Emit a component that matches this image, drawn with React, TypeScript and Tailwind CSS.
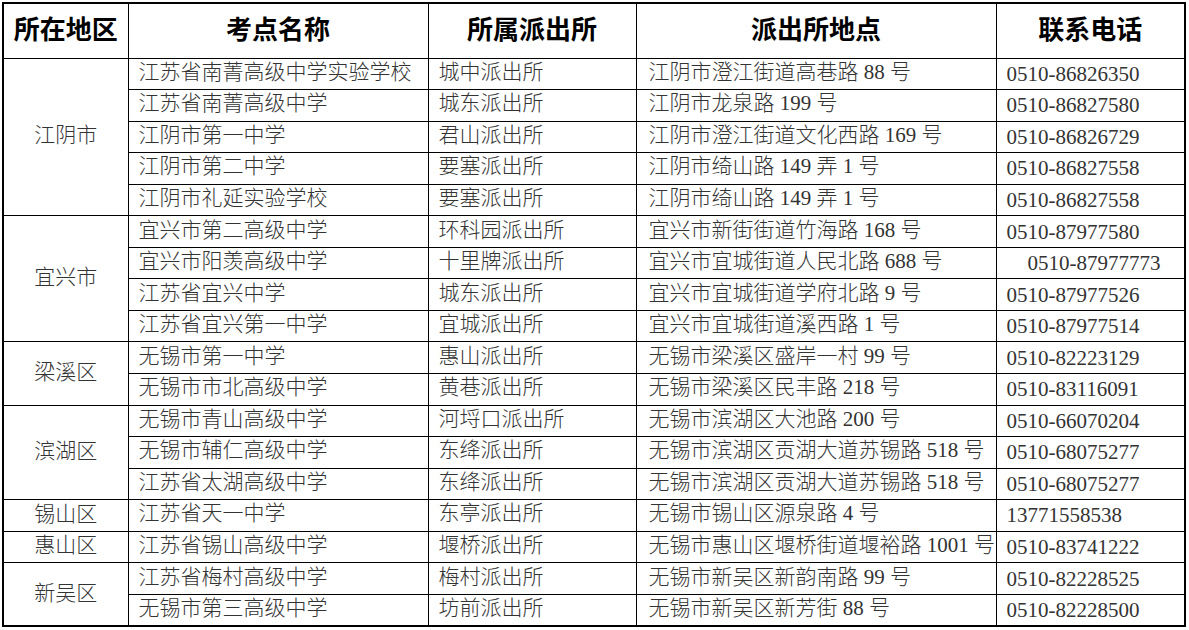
import React from "react";

type Row = { school: string; station: string; addr: string; phone: string; indent?: boolean };

const groups: { region: string; rows: Row[] }[] = [
  {
    region: "江阴市",
    rows: [
      { school: "江苏省南菁高级中学实验学校", station: "城中派出所", addr: "江阴市澄江街道高巷路 88 号", phone: "0510-86826350" },
      { school: "江苏省南菁高级中学", station: "城东派出所", addr: "江阴市龙泉路 199 号", phone: "0510-86827580" },
      { school: "江阴市第一中学", station: "君山派出所", addr: "江阴市澄江街道文化西路 169 号", phone: "0510-86826729" },
      { school: "江阴市第二中学", station: "要塞派出所", addr: "江阴市绮山路 149 弄 1 号", phone: "0510-86827558" },
      { school: "江阴市礼延实验学校", station: "要塞派出所", addr: "江阴市绮山路 149 弄 1 号", phone: "0510-86827558" },
    ],
  },
  {
    region: "宜兴市",
    rows: [
      { school: "宜兴市第二高级中学", station: "环科园派出所", addr: "宜兴市新街街道竹海路 168 号", phone: "0510-87977580" },
      { school: "宜兴市阳羡高级中学", station: "十里牌派出所", addr: "宜兴市宜城街道人民北路 688 号", phone: "0510-87977773", indent: true },
      { school: "江苏省宜兴中学", station: "城东派出所", addr: "宜兴市宜城街道学府北路 9 号", phone: "0510-87977526" },
      { school: "江苏省宜兴第一中学", station: "宜城派出所", addr: "宜兴市宜城街道溪西路 1 号", phone: "0510-87977514" },
    ],
  },
  {
    region: "梁溪区",
    rows: [
      { school: "无锡市第一中学", station: "惠山派出所", addr: "无锡市梁溪区盛岸一村 99 号", phone: "0510-82223129" },
      { school: "无锡市市北高级中学", station: "黄巷派出所", addr: "无锡市梁溪区民丰路 218 号", phone: "0510-83116091" },
    ],
  },
  {
    region: "滨湖区",
    rows: [
      { school: "无锡市青山高级中学", station: "河埒口派出所", addr: "无锡市滨湖区大池路 200 号", phone: "0510-66070204" },
      { school: "无锡市辅仁高级中学", station: "东绛派出所", addr: "无锡市滨湖区贡湖大道苏锡路 518 号", phone: "0510-68075277" },
      { school: "江苏省太湖高级中学", station: "东绛派出所", addr: "无锡市滨湖区贡湖大道苏锡路 518 号", phone: "0510-68075277" },
    ],
  },
  {
    region: "锡山区",
    rows: [
      { school: "江苏省天一中学", station: "东亭派出所", addr: "无锡市锡山区源泉路 4 号", phone: "13771558538" },
    ],
  },
  {
    region: "惠山区",
    rows: [
      { school: "江苏省锡山高级中学", station: "堰桥派出所", addr: "无锡市惠山区堰桥街道堰裕路 1001 号", phone: "0510-83741222" },
    ],
  },
  {
    region: "新吴区",
    rows: [
      { school: "江苏省梅村高级中学", station: "梅村派出所", addr: "无锡市新吴区新韵南路 99 号", phone: "0510-82228525" },
      { school: "无锡市第三高级中学", station: "坊前派出所", addr: "无锡市新吴区新芳街 88 号", phone: "0510-82228500" },
    ],
  },
];

const font = { fontFamily: '"Liberation Serif", "Noto Sans CJK SC", serif' };

export default function App() {
  return (
    <div className="w-[1189px] h-[630px] bg-white pl-[2px] pt-[2px] overflow-hidden" style={font}>
      <table className="border-collapse border-2 border-black table-fixed w-[1182px] text-[21px] text-[#333] leading-none">
        <colgroup>
          <col className="w-[125px]" />
          <col className="w-[300px]" />
          <col className="w-[208px]" />
          <col className="w-[360px]" />
          <col className="w-[189px]" />
        </colgroup>
        <thead>
          <tr className="h-[55px] text-[26px] text-black">
            <th className="border border-black text-center font-bold">所在地区</th>
            <th className="border border-black text-center font-bold">考点名称</th>
            <th className="border border-black text-center font-bold">所属派出所</th>
            <th className="border border-black text-center font-bold">派出所地点</th>
            <th className="border border-black text-center font-bold">联系电话</th>
          </tr>
        </thead>
        <tbody>
          {groups.map((g) =>
            g.rows.map((r, i) => (
              <tr key={g.region + i} className="h-[31.55px]">
                {i === 0 && (
                  <td rowSpan={g.rows.length} className="border border-black text-center align-middle font-light pb-[2px]">
                    {g.region}
                  </td>
                )}
                <td className="border border-black pl-[10px] pb-[3px] whitespace-nowrap font-light">{r.school}</td>
                <td className="border border-black pl-[10px] pb-[3px] whitespace-nowrap font-light">{r.station}</td>
                <td className="border border-black pl-[12px] pb-[3px] whitespace-nowrap font-light">{r.addr}</td>
                <td
                  className={
                    r.indent
                      ? "border border-black pl-[31px] pt-[1px] whitespace-nowrap"
                      : "border border-black pl-[10px] pt-[1px] whitespace-nowrap"
                  }
                >
                  {r.phone}
                </td>
              </tr>
            ))
          )}
        </tbody>
      </table>
    </div>
  );
}
